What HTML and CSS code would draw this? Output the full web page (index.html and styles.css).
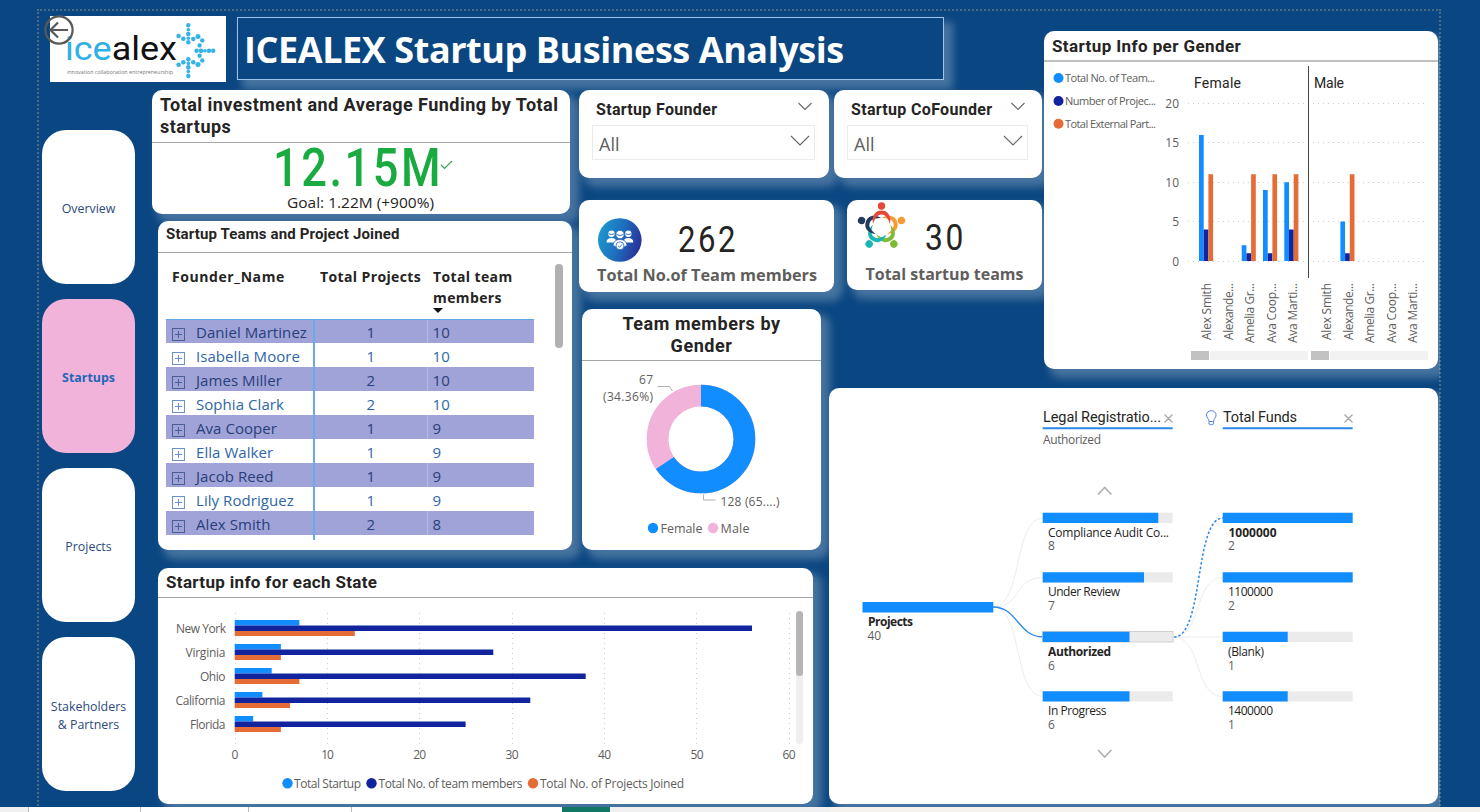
FILE: index.html
```html
<!DOCTYPE html>
<html lang="en">
<head>
<meta charset="utf-8">
<title>ICEALEX Startup Business Analysis</title>
<link rel="stylesheet" href="styles.css">
</head>
<body>
<main class="board">
  <div class="frame"></div>

  <header class="top">
    <div class="logo">
      <svg width="176" height="66" viewBox="50 16 176 66">
        <text class="logo-text" x="65" y="60" textLength="112" lengthAdjust="spacingAndGlyphs"><tspan class="ice">ice</tspan><tspan>alex</tspan></text>
        <text class="logo-tag" x="67" y="74" textLength="106" lengthAdjust="spacingAndGlyphs">innovation collaboration entrepreneurship</text>
        <g fill="#35b2e6">
          <circle cx="188.3" cy="25.3" r="2.2"/><circle cx="188.3" cy="29.8" r="1.8"/><circle cx="188.3" cy="34" r="2.3"/><circle cx="188.3" cy="38.2" r="1.8"/><circle cx="188.3" cy="42.2" r="2.2"/>
          <circle cx="178.6" cy="36" r="2.3"/><circle cx="183.3" cy="38.8" r="2.3"/><circle cx="193.3" cy="39" r="2.3"/><circle cx="198" cy="36.4" r="2.5"/><circle cx="202.3" cy="40.4" r="2.2"/><circle cx="199.6" cy="45.4" r="2.2"/>
          <circle cx="196.6" cy="50.8" r="2.2"/><circle cx="201" cy="50.8" r="2.4"/><circle cx="205" cy="50.8" r="1.8"/><circle cx="209" cy="50.8" r="2.2"/><circle cx="213.2" cy="50.8" r="2.2"/>
          <circle cx="199.6" cy="55.8" r="2.2"/><circle cx="202.3" cy="60.4" r="2.2"/><circle cx="198" cy="64.6" r="2.5"/><circle cx="193.3" cy="62.2" r="2.3"/><circle cx="183.3" cy="62.2" r="2.3"/><circle cx="178.6" cy="64.8" r="2.3"/>
          <circle cx="188.3" cy="59.2" r="2.2"/><circle cx="188.3" cy="63.4" r="1.8"/><circle cx="188.3" cy="67.4" r="2.3"/><circle cx="188.3" cy="71.6" r="1.8"/><circle cx="188.3" cy="76" r="2.2"/>
        </g>
      </svg>
      <svg class="back" width="30" height="30" viewBox="0 0 30 30" fill="none" stroke="#585858" stroke-width="2.2"><circle cx="15" cy="15" r="13.6"/><path d="M24 15H7M14 7.500 6.500 15l7.500 7.500"/></svg>
    </div>
    <h1 class="headline">ICEALEX Startup Business Analysis</h1>
  </header>

  <nav class="nav">
    <a class="nav-item">Overview</a>
    <a class="nav-item active">Startups</a>
    <a class="nav-item">Projects</a>
    <a class="nav-item">Stakeholders<br>&amp; Partners</a>
  </nav>

  <div class="left-stack">
    <section class="card invest">
      <h2 class="title t-invest">Total investment and Average Funding by Total<br>startups</h2>
      <svg class="goal" width="418" height="71" viewBox="152 143 418 71">
        <text class="din green" x="273" y="185.500" font-size="54" textLength="170" lengthAdjust="spacingAndGlyphs">12.15M</text>
        <path d="M441 165l3.500 3.500 7.500-7.500" fill="none" stroke="#3aa655" stroke-width="1.200"/>
        <text class="ink" x="287" y="208" font-size="14.500" textLength="147" lengthAdjust="spacingAndGlyphs">Goal: 1.22M (+900%)</text>
      </svg>
    </section>

    <section class="card teams">
      <h2 class="title t-teams">Startup Teams and Project Joined</h2>
      <div class="table-wrap">
        <table>
          <thead><tr><th>Founder_Name</th><th class="mid">Total Projects</th><th>Total team members<i class="sort"></i></th></tr></thead>
          <tbody>
            <tr><td><i class="plus"></i>Daniel Martinez</td><td>1</td><td>10</td></tr>
            <tr><td><i class="plus"></i>Isabella Moore</td><td>1</td><td>10</td></tr>
            <tr><td><i class="plus"></i>James Miller</td><td>2</td><td>10</td></tr>
            <tr><td><i class="plus"></i>Sophia Clark</td><td>2</td><td>10</td></tr>
            <tr><td><i class="plus"></i>Ava Cooper</td><td>1</td><td>9</td></tr>
            <tr><td><i class="plus"></i>Ella Walker</td><td>1</td><td>9</td></tr>
            <tr><td><i class="plus"></i>Jacob Reed</td><td>1</td><td>9</td></tr>
            <tr><td><i class="plus"></i>Lily Rodriguez</td><td>1</td><td>9</td></tr>
            <tr><td><i class="plus"></i>Alex Smith</td><td>2</td><td>8</td></tr>
            <tr class="tail"><td></td><td></td><td></td></tr>
          </tbody>
        </table>
        <div class="scroll"></div>
      </div>
    </section>
  </div>

  <div class="filters">
    <div class="row">
      <section class="card slicer founder">
        <div class="slicer-head"><h3>Startup Founder</h3><svg width="14" height="9" viewBox="0 0 14 9"><path d="M.5 1 7 7.500 13.500 1"/></svg></div>
        <div class="select"><span>All</span><svg width="20" height="12" viewBox="0 0 20 12"><path d="M1 1l9 9 9-9"/></svg></div>
      </section>
      <section class="card slicer cofounder">
        <div class="slicer-head"><h3>Startup CoFounder</h3><svg width="14" height="9" viewBox="0 0 14 9"><path d="M.5 1 7 7.500 13.500 1"/></svg></div>
        <div class="select"><span>All</span><svg width="20" height="12" viewBox="0 0 20 12"><path d="M1 1l9 9 9-9"/></svg></div>
      </section>
    </div>
    <div class="row kpis">
      <section class="card kpi members">
        <svg width="255" height="92" viewBox="579 200 255 92">
          <defs><linearGradient id="badge" x1="0" y1=".3" x2="1" y2=".6"><stop offset="0" stop-color="#1c9ad0"/><stop offset=".5" stop-color="#1e6fbd"/><stop offset="1" stop-color="#2a2f98"/></linearGradient></defs>
          <circle cx="619.800" cy="240" r="21.800" fill="url(#badge)"/>
          <g fill="#fff">
            <circle cx="611.500" cy="233.800" r="3.200"/><circle cx="628.300" cy="233.800" r="3.200"/>
            <path d="M606.500 242.500q0-4.500 5-4.500t5 4.500zM623.300 242.500q0-4.500 5-4.500t5 4.500z"/>
            <circle cx="620" cy="234.500" r="4.200" stroke="#1f65b8" stroke-width=".8"/>
            <path d="M613 245.500q.500-6 7-6t7 6l-3 1.500h-8z" stroke="#1f65b8" stroke-width=".7"/>
            <circle cx="620" cy="245.800" r="4" stroke="#1f65b8" stroke-width=".8"/>
          </g>
          <path d="M608.700 233.800q2.800 1.500 5.600 0M625.500 233.800q2.800 1.500 5.600 0M616.500 234.500q3.500 2 7 0M618 245.800l1.500 1.400 2.600-2.700" fill="none" stroke="#1f65b8" stroke-width=".9"/>
          <text class="din num" x="678" y="251.500" font-size="37" textLength="60" lengthAdjust="spacingAndGlyphs">262</text>
          <text class="cap" x="597" y="280.500" font-size="16" textLength="220" lengthAdjust="spacingAndGlyphs">Total No.of Team members</text>
        </svg>
      </section>
      <section class="card kpi count">
        <svg width="195" height="90" viewBox="847 200 195 90">
          <defs><g id="person"><circle cx="0" cy="-21" r="3.700"/><path d="M-8.500-3C-10-12-6-16.500 0-16.500S10-12 8.500-3C7-7 5-12.500 0-12.500S-7-7-8.500-3Z"/></g><clipPath id="label-clip"><rect x="847" y="260" width="195" height="20.500"/></clipPath></defs>
          <g transform="translate(881.500 227)">
            <use href="#person" fill="#f79a32" transform="rotate(72)"/><use href="#person" fill="#7fba35" transform="rotate(144)"/><use href="#person" fill="#18b5b5" transform="rotate(216)"/><use href="#person" fill="#233a5e" transform="rotate(288)"/><use href="#person" fill="#e2493b"/>
          </g>
          <text class="din num" x="925" y="249.500" font-size="36" textLength="41" lengthAdjust="spacingAndGlyphs">30</text>
          <g clip-path="url(#label-clip)"><text class="cap" x="865.500" y="280" font-size="16" textLength="158" lengthAdjust="spacingAndGlyphs">Total startup teams</text></g>
        </svg>
      </section>
    </div>
  </div>

  <section class="card donut">
    <h2 class="title t-donut">Team members by<br>Gender</h2>
    <svg class="chart" width="239" height="188" viewBox="582 362 239 188">
      <g fill="none" stroke-width="21.800">
        <circle cx="701" cy="439" r="43.400" stroke="#f1b3da"/>
        <circle cx="701" cy="439" r="43.400" stroke="#118dff" pathLength="100" stroke-dasharray="65.640 34.360" transform="rotate(-90 701 439)"/>
      </g>
      <path d="M657.500 386.500h12l3 4.500M703.500 494.500v5.500h12" fill="none" stroke="#b3b3b3"/>
      <g font-size="12"><text x="639" y="384" textLength="14">67</text><text x="603" y="401" textLength="50">(34.36%)</text><text x="720.500" y="506" textLength="59">128 (65....)</text></g>
      <circle cx="653" cy="528" r="5.200" fill="#118dff"/><circle cx="713" cy="528" r="5.200" fill="#f1b3da"/>
      <g font-size="12.500"><text x="660.500" y="533" textLength="42">Female</text><text x="720.500" y="533" textLength="29">Male</text></g>
    </svg>
  </section>

  <section class="card gender">
    <h2 class="title t-gender">Startup Info per Gender</h2>
    <svg class="chart" width="394" height="307" viewBox="1044 62 394 307">
      <g><circle cx="1058.500" cy="78" r="5" fill="#118dff"/><circle cx="1058.500" cy="101" r="5" fill="#12239e"/><circle cx="1058.500" cy="123.700" r="5" fill="#e66c37"/></g>
      <g font-size="11"><text x="1065" y="82" textLength="90">Total No. of Team...</text><text x="1065" y="105" textLength="91">Number of Projec...</text><text x="1065" y="128" textLength="91">Total External Part...</text></g>
      <g class="din-light" font-size="14"><text x="1194" y="88" textLength="47">Female</text><text x="1314" y="88" textLength="30">Male</text></g>
      <g font-size="12" text-anchor="end"><text x="1179" y="108">20</text><text x="1179" y="147">15</text><text x="1179" y="187">10</text><text x="1179" y="226">5</text><text x="1179" y="266">0</text></g>
      <path class="grid" d="M1188 103.500h240M1188 142.500h240M1188 182.500h240M1188 221.500h240M1188 261.500h240"/>
      <g fill="#118dff"><path d="M1199 135h4.700v126h-4.700zM1241.700 245.300h4.700V261h-4.700zM1263 190h4.700v71h-4.700zM1284.300 182.200h4.700V261h-4.700zM1340.400 221.600h4.700V261h-4.700z"/></g>
      <g fill="#12239e"><path d="M1203.700 229.500h4.700V261h-4.700zM1246.400 253.200h4.700v7.800h-4.700zM1267.700 253.200h4.700v7.800h-4.700zM1289 229.500h4.700V261h-4.700zM1345.100 253.200h4.700v7.800h-4.700z"/></g>
      <g fill="#e66c37"><path d="M1208.400 174.300h4.700V261h-4.700zM1251.100 174.300h4.700V261h-4.700zM1272.400 174.300h4.700V261h-4.700zM1293.700 174.300h4.700V261h-4.700zM1349.800 174.300h4.700V261h-4.700z"/></g>
      <path d="M1308.500 66v212" stroke="#444"/>
      <g font-size="12">
        <text transform="translate(1211 340) rotate(-90)" textLength="57">Alex Smith</text><text transform="translate(1232.500 340) rotate(-90)" textLength="57">Alexande...</text><text transform="translate(1254 343) rotate(-90)" textLength="60">Amelia Gr...</text><text transform="translate(1275.500 343) rotate(-90)" textLength="60">Ava Coop...</text><text transform="translate(1296.500 343) rotate(-90)" textLength="60">Ava Marti...</text>
        <text transform="translate(1331 340) rotate(-90)" textLength="57">Alex Smith</text><text transform="translate(1352.500 340) rotate(-90)" textLength="57">Alexande...</text><text transform="translate(1374 343) rotate(-90)" textLength="60">Amelia Gr...</text><text transform="translate(1395.500 343) rotate(-90)" textLength="60">Ava Coop...</text><text transform="translate(1416.500 343) rotate(-90)" textLength="60">Ava Marti...</text>
      </g>
      <path d="M1210 351h98v9h-98zM1330 351h98v9h-98z" fill="#f2f2f2"/><path d="M1191 351h18v9h-18zM1311 351h18v9h-18z" fill="#c2c2c2"/>
    </svg>
  </section>

  <section class="card state">
    <h2 class="title t-state">Startup info for each State</h2>
    <svg class="chart" width="655" height="206" viewBox="158 598 655 206">
      <path class="grid" d="M235.500 613v132M327.500 613v132M419.500 613v132M512.500 613v132M604.500 613v132M696.500 613v132M789.500 613v132"/>
      <g fill="#118dff"><path d="M234.700 620h64.700v5.500h-64.700zM234.700 644h46.200v5.500h-46.200zM234.700 668h37v5.500h-37zM234.700 692h27.700v5.500h-27.700zM234.700 716h18.500v5.500h-18.500z"/></g>
      <g fill="#12239e"><path d="M234.700 625.400h517.300v5.500H234.700zM234.700 649.400h258.600v5.500H234.700zM234.700 673.400h351v5.500h-351zM234.700 697.400h295.600v5.500H234.700zM234.700 721.400h230.900v5.500H234.700z"/></g>
      <g fill="#e66c37"><path d="M234.700 630.900h120.100v5h-120.100zM234.700 654.900h46.200v5h-46.200zM234.700 678.900h64.700v5h-64.700zM234.700 702.900h55.400v5h-55.400zM234.700 726.900h46.200v5h-46.200z"/></g>
      <g font-size="12"><text x="176" y="633" textLength="50">New York</text><text x="185.500" y="657" textLength="40">Virginia</text><text x="200" y="681" textLength="25.500">Ohio</text><text x="175.500" y="705" textLength="50">California</text><text x="190" y="729" textLength="35.500">Florida</text></g>
      <g font-size="12" text-anchor="middle"><text x="235" y="759">0</text><text x="327.500" y="759" textLength="12.500">10</text><text x="419.700" y="759" textLength="13">20</text><text x="512" y="759" textLength="13">30</text><text x="604.500" y="759" textLength="13">40</text><text x="697" y="759" textLength="13">50</text><text x="789" y="759" textLength="13">60</text></g>
      <circle cx="287.500" cy="783.300" r="5.200" fill="#118dff"/><circle cx="371.500" cy="783.300" r="5.200" fill="#12239e"/><circle cx="533" cy="783.300" r="5.200" fill="#e66c37"/>
      <g font-size="12"><text x="294" y="787.500" textLength="67">Total Startup</text><text x="378.500" y="787.500" textLength="144">Total No. of team members</text><text x="540" y="787.500" textLength="144">Total No. of Projects Joined</text></g>
      <rect x="796" y="611" width="7" height="133" rx="3" fill="#efefef"/><rect x="796" y="611" width="7" height="65" rx="3.500" fill="#b5b5b5"/>
    </svg>
  </section>

  <section class="card tree">
    <svg width="610" height="416" viewBox="829 388 610 416">
      <g class="din-light" font-size="14.500"><text x="1043" y="422" textLength="118">Legal Registratio...</text><text x="1223" y="422" textLength="74">Total Funds</text></g>
      <path d="M1042.700 428.200h130M1222.700 428.200h130" stroke="#2b88ea" stroke-width="2"/>
      <path d="M1164.500 414.500l8 8m0-8-8 8M1344.500 414.500l8 8m0-8-8 8" stroke="#a6a6a6" stroke-width="1.200"/>
      <path d="M1209 421.500c0-3-2.500-3.500-2.500-6.500a4.800 4.300 0 0 1 9.600 0c0 3-2.500 3.500-2.500 6.500zM1209 421.500v2.500q2.300 1.500 4.600 0v-2.500" fill="none" stroke="#5a86e0"/>
      <text x="1043" y="444" font-size="12" textLength="58">Authorized</text>
      <path d="M1098 494.500l6.700-7 6.700 7M1098 750l6.700 7 6.700-7" fill="none" stroke="#b3b3b3" stroke-width="1.800"/>
      <g fill="none" stroke="#ededed"><path d="M993 607c30 0 20-89 50-89M993 607c30 0 20-29.500 50-29.500M993 607c30 0 20 89.500 50 89.500M1173 637c30 0 20-59.500 50-59.500M1173 637h50M1173 637c30 0 20 59.500 50 59.500"/></g>
      <path d="M993 607c25 0 25 30 50 30" fill="none" stroke="#2b88ea" stroke-width="1.300"/>
      <path d="M1174 637c30 0 20-119 49-119" fill="none" stroke="#2b88ea" stroke-width="1.500" stroke-dasharray="2.500 2"/>
      <path fill="#ebebeb" d="M1042.700 512.700h130V523h-130zM1042.700 572.300h130v10.300h-130zM1042.700 631.700h130V642h-130zM1042.700 691.300h130v10.300h-130zM1222.700 631.700h130V642h-130zM1222.700 691.300h130v10.300h-130z"/>
      <rect x="1042.500" y="631.500" width="130.500" height="10.500" fill="none" stroke="#cfcfcf"/>
      <path fill="#118dff" d="M862.500 602h130.800v10.500H862.500zM1042.700 512.700h115.600V523h-115.600zM1042.700 572.300H1144v10.300h-101.300zM1042.700 631.700h86.800V642h-86.800zM1042.700 691.300h86.800v10.300h-86.800zM1222.700 512.700h130V523h-130zM1222.700 572.300h130v10.300h-130zM1222.700 631.700h65V642h-65zM1222.700 691.300h65v10.300h-65z"/>
      <g class="node" font-size="12"><text class="b" x="868" y="626" textLength="45">Projects</text><text x="1048" y="537" textLength="121">Compliance Audit Co...</text><text x="1048" y="596" textLength="72">Under Review</text><text class="b" x="1048" y="656" textLength="63">Authorized</text><text x="1048" y="715" textLength="58.500">In Progress</text><text class="b" x="1228.500" y="537" textLength="48">1000000</text><text x="1228" y="596" textLength="45">1100000</text><text x="1228" y="656" textLength="36">(Blank)</text><text x="1228" y="715" textLength="45">1400000</text></g>
      <g font-size="12"><text x="867.500" y="640" textLength="13.500">40</text><text x="1048" y="550">8</text><text x="1048" y="610">7</text><text x="1048" y="670">6</text><text x="1048" y="729">6</text><text x="1228" y="550">2</text><text x="1228" y="610">2</text><text x="1228" y="670">1</text><text x="1228" y="729">1</text></g>
    </svg>
  </section>
</main>
<footer class="tabs"><i class="t0"></i><i class="t1"></i><i class="t2"></i><i class="t3"></i><i class="t4"></i><i class="t5"></i><i class="t6"></i></footer>
</body>
</html>
```
FILE: styles.css
```css
* { box-sizing: border-box; }
body { margin: 0; width: 1480px; height: 812px; overflow: hidden; font-family: "Open Sans", "Noto Sans", sans-serif; color: #252423; }
svg { display: block; }
h1, h2, h3 { margin: 0; }

.board {
  position: relative; height: 807px; padding: 16px 0 0 42px; background: #0a4681; overflow: hidden;
  display: grid; grid-template-columns: 110px 427px 250px 215px 394px; grid-template-rows: 74px 219px 79px 180px 236px;
}
.frame { position: absolute; left: 37px; top: 9px; width: 1404px; height: 820px; border: 2px dotted #4a6a86; }

.top { grid-area: 1 / 1 / 2 / 5; display: flex; padding-left: 8px; gap: 11px; }
.logo { position: relative; width: 176px; height: 66px; background: #fff; }
.back { position: absolute; left: -6px; top: -1px; }
.logo-text { font-family: Roboto, sans-serif; font-size: 34px; font-weight: 400; fill: #111; }
svg .logo-text .ice { fill: #2fb0e6; }
.logo-tag { font-size: 5.5px; fill: #777; }
.headline { width: 707px; height: 63px; margin-top: 1px; border: 1px solid #9cc3ea; padding-left: 6px; font: 700 36px/63px "Open Sans", sans-serif; letter-spacing: -.43px; color: #fff; white-space: nowrap; box-shadow: 7px 7px 8px 2px rgba(255,255,255,.25); }

.nav { grid-area: 2 / 1 / 6 / 2; padding-top: 40px; display: flex; flex-direction: column; gap: 15px; }
.nav-item { width: 93px; height: 154px; border-radius: 24px; background: #fff; display: flex; align-items: center; justify-content: center; text-align: center; font-size: 12.4px; line-height: 18px; color: #2c4a7c; padding-top: 3px; }
.nav-item.active { background: #f1b3da; color: #1f66b8; font-weight: 700; }

.card { background: #fff; border-radius: 10px; box-shadow: 7px 7px 8px 2px rgba(255,255,255,.25); overflow: hidden; }
.title { font-family: Roboto, sans-serif; font-weight: 700; color: #252423; border-bottom: 1px solid #a6a6a6; white-space: nowrap; }

.left-stack { grid-area: 2 / 2 / 5 / 3; display: flex; flex-direction: column; gap: 7px; }
.invest { width: 418px; height: 124px; }
.t-invest { height: 53px; padding: 4px 0 0 8px; font-size: 18px; line-height: 22px; letter-spacing: .46px; }
.goal { overflow: visible; }
.teams { width: 414px; height: 329px; margin-left: 6px; }
.t-teams { height: 32px; padding: 2px 0 0 8px; font-size: 15px; line-height: 22px; letter-spacing: .14px; }
.table-wrap { display: flex; padding-left: 8px; }
table { width: 367px; border-collapse: collapse; table-layout: fixed; font-size: 15px; }
th { height: 66px; padding: 13px 0 0 6px; vertical-align: top; text-align: left; font-size: 14px; line-height: 21px; letter-spacing: .38px; border-bottom: 1px solid #5ea5ea; width: 107px; white-space: nowrap; }
th:last-child { white-space: normal; }
th:first-child { width: 148px; letter-spacing: .58px; padding-left: 6px; }
th.mid { width: 113px; }
.sort { display: block; width: 0; border: 5px solid transparent; border-top-color: #111; border-bottom: 0; margin-top: 0; }
td { height: 24px; padding: 2px 0 0 5px; line-height: 20px; letter-spacing: .06px; color: #2f66a8; white-space: nowrap; }
td:first-child { padding-left: 6px; border-right: 2px solid #6aa8e6; }
td:nth-child(2) { text-align: center; padding: 2px 0 0; }
td:nth-child(3) { border-left: 1px solid transparent; }
tbody tr:nth-child(odd) { background: #a0a3d8; }
tbody tr:nth-child(odd) td { color: #27407a; }
tbody tr:nth-child(odd) td:nth-child(3) { border-left-color: #b7b9e3; }
tbody tr.tail { background: none; }
.tail td { height: 5px; padding: 0; }
.plus { display: inline-block; width: 13px; height: 13px; margin-right: 11px; vertical-align: -3px; border: 1px solid currentColor; opacity: .7; background: linear-gradient(currentColor, currentColor) center / 7px 1px no-repeat, linear-gradient(currentColor, currentColor) center / 1px 7px no-repeat; }
.scroll { width: 8px; height: 84px; margin: 11px 0 0 21px; border-radius: 4px; background: #b0b0b0; }

.filters { grid-area: 2 / 3 / 3 / 5; display: flex; flex-direction: column; gap: 22px; }
.row { display: flex; gap: 5px; }
.slicer { width: 250px; height: 88px; padding: 9px 14px 0 13px; }
.cofounder { width: 208px; }
.slicer-head { display: flex; justify-content: space-between; height: 26px; padding: 0 3px 0 4px; }
.slicer-head h3 { font: 700 16px/21px Roboto, sans-serif; letter-spacing: .32px; white-space: nowrap; }
.slicer-head svg { margin-top: 3px; }
.slicer svg { fill: none; stroke: #666; stroke-width: 1.1; }
.select { height: 35px; border: 1px solid #ebebeb; display: flex; align-items: center; justify-content: space-between; padding: 3px 4px 0 6px; font-size: 18px; color: #605e5c; }
.select svg { margin-top: -6px; }
.kpis { gap: 13px; }
.members { width: 255px; height: 92px; }
.count { width: 195px; height: 90px; }

.donut { grid-area: 3 / 3 / 5 / 4; width: 239px; height: 241px; margin-left: 3px; }
.t-donut { height: 52px; padding-top: 4px; text-align: center; font-size: 18px; line-height: 22px; letter-spacing: .55px; }
.donut .chart { margin-top: 1px; }
.gender { grid-area: 1 / 5 / 4 / 6; height: 338px; margin-top: 15px; clip-path: inset(0 -2px -17px 0); }
.t-gender { height: 31px; padding: 4px 0 0 8px; font-size: 17px; line-height: 22px; letter-spacing: .4px; border-bottom: 2px solid #c0c0c0; }
.state { grid-area: 5 / 2 / 6 / 4; width: 655px; height: 236px; margin-left: 6px; }
.t-state { height: 30px; padding: 3px 0 0 8px; font-size: 17px; line-height: 22px; letter-spacing: .34px; }
.tree { grid-area: 4 / 4 / 6 / 6; height: 416px; clip-path: inset(0 -2px -17px 0); }

svg text { fill: #605e5c; }
svg .din { font-family: Roboto, sans-serif; fill: #252423; }
svg .num { letter-spacing: 3px; }
svg .green { fill: #1aab40; font-weight: 500; letter-spacing: 3px; }
svg .ink, svg .node text { fill: #252423; }
svg .cap { font-weight: 700; }
svg .din-light text { font-family: Roboto, sans-serif; fill: #252423; }
svg .node .b { font-weight: 700; }
svg .logo-text { fill: #111; }
.grid { fill: none; stroke: #cfcfcf; stroke-dasharray: 1 4; }

.tabs { display: flex; height: 5px; background: #f5f2ee; }
.tabs i { height: 5px; background: #fff; border-right: 1px solid #bbb; }
.tabs .t0 { width: 29px; background: #f0f0f0; }
.tabs .t1 { width: 112px; }
.tabs .t2 { width: 108px; }
.tabs .t3 { width: 103px; }
.tabs .t4 { width: 210px; border: 0; }
.tabs .t5 { width: 48px; border: 0; background: #117865; }
.tabs .t6 { width: 220px; border: 0; background: #f0f0f0; }
```
